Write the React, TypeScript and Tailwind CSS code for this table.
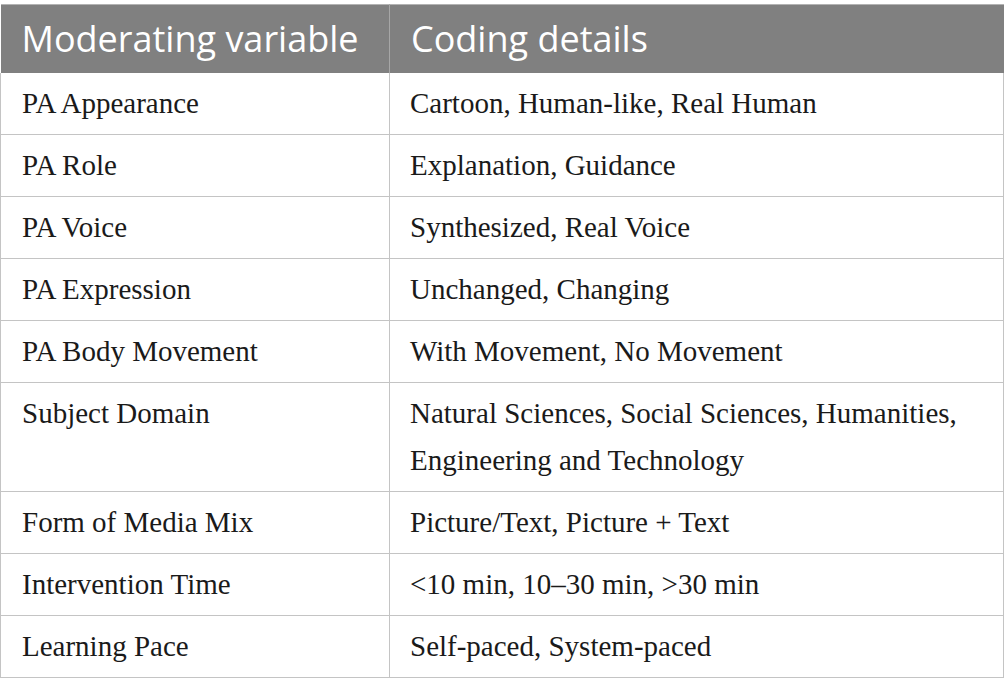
const rows: [string, string][] = [
  ["PA Appearance", "Cartoon, Human-like, Real Human"],
  ["PA Role", "Explanation, Guidance"],
  ["PA Voice", "Synthesized, Real Voice"],
  ["PA Expression", "Unchanged, Changing"],
  ["PA Body Movement", "With Movement, No Movement"],
  ["Subject Domain", "Natural Sciences, Social Sciences, Humanities, Engineering and Technology"],
  ["Form of Media Mix", "Picture/Text, Picture + Text"],
  ["Intervention Time", "<10 min, 10–30 min, >30 min"],
  ["Learning Pace", "Self-paced, System-paced"],
];

export default function App() {
  return (
    <div className="w-[1005px] h-[694px] bg-white pt-1">
      <table className="w-[1004px] border-collapse table-fixed">
        <colgroup>
          <col className="w-[389px]" />
          <col />
        </colgroup>
        <thead>
          <tr className="bg-[#808080] h-[68px] border-t border-[#b3b3b3]">
            <th className="text-left font-normal text-white text-[36px] px-[21px] border-r border-[#a6a6a6] font-['Open_Sans',sans-serif]">
              Moderating variable
            </th>
            <th className="text-left font-normal text-white text-[36px] px-[21px] font-['Open_Sans',sans-serif]">
              Coding details
            </th>
          </tr>
        </thead>
        <tbody className="font-['Liberation_Serif',serif] text-[29px] text-[#1a1a1a]">
          {rows.map(([a, b]) => (
            <tr key={a} className="border-b border-[#c4c4c4]">
              <td className="align-top border-l border-r border-[#c4c4c4] px-[21px] pt-[7px] pb-[7px] leading-[47px]">{a}</td>
              <td className="align-top border-r border-[#c4c4c4] px-[20px] pt-[7px] pb-[7px] leading-[47px]">{b}</td>
            </tr>
          ))}
        </tbody>
      </table>
    </div>
  );
}
